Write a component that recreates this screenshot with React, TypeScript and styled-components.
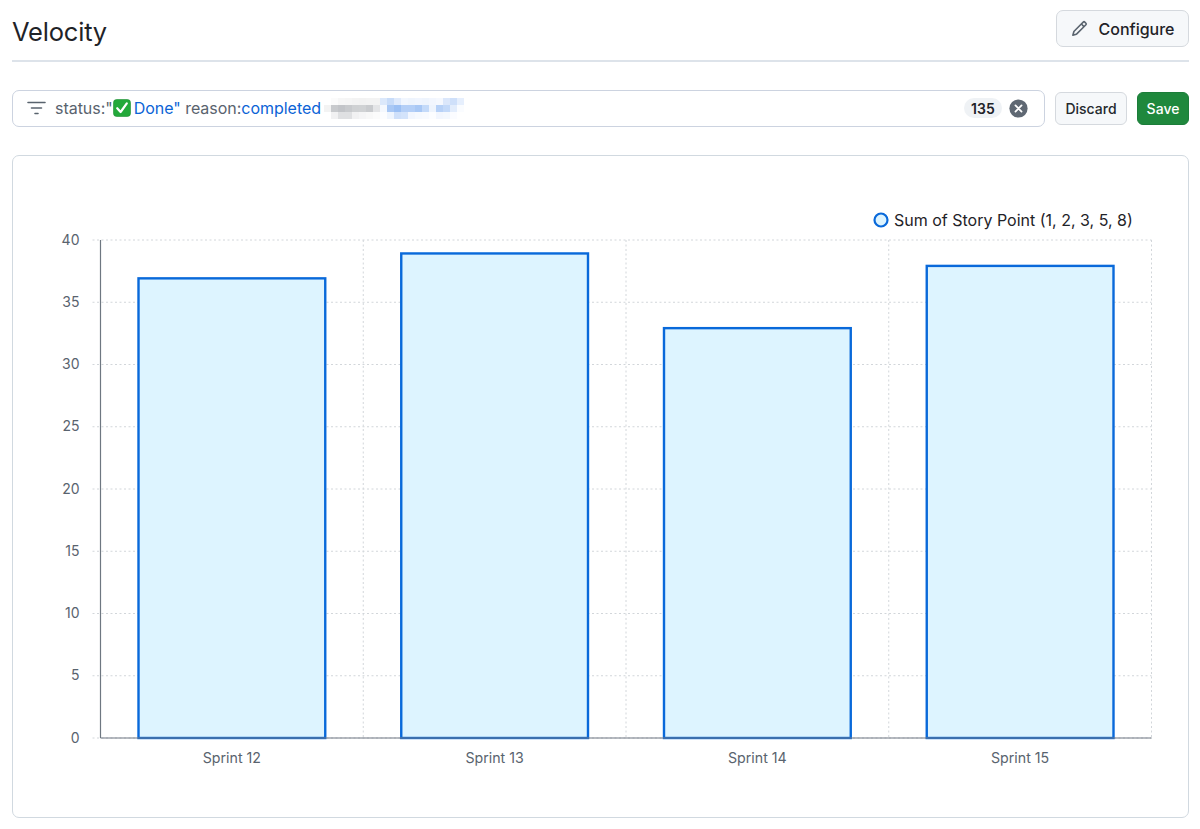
import React from "react";
import styled, { createGlobalStyle } from "styled-components";

const Global = createGlobalStyle`
  html, body { margin: 0; padding: 0; background: #fff; }
  body { font-family: Inter, "Liberation Sans", sans-serif; color: #1f2328; }
`;

const Page = styled.div`
  width: 1200px;
  height: 829px;
  box-sizing: border-box;
  padding: 0 11px 11px 12px;
  display: flex;
  flex-direction: column;
  overflow: hidden;
`;

const Header = styled.header`
  height: 62px;
  box-sizing: border-box;
  border-bottom: 2px solid #dde3ea;
  padding-top: 10px;
  display: flex;
  justify-content: space-between;
  align-items: flex-start;
`;

const Title = styled.h1`
  margin: 0;
  padding-top: 5px;
  font-size: 25.5px;
  line-height: 34px;
  font-weight: 400;
  letter-spacing: -0.2px;
  color: #1f2328;
`;

const ConfigureButton = styled.button`
  width: 133px;
  height: 37px;
  box-sizing: border-box;
  display: flex;
  align-items: center;
  justify-content: center;
  gap: 11px;
  background: #f6f8fa;
  border: 1px solid #d5d9de;
  border-radius: 7px;
  font: 500 16px Inter, "Liberation Sans", sans-serif;
  color: #1f2328;
  padding: 0;
`;

const FilterRow = styled.div`
  margin-top: 28px;
  display: flex;
  align-items: center;
  height: 37px;
`;

const FilterBox = styled.div`
  width: 1033px;
  height: 37px;
  box-sizing: border-box;
  border: 1px solid #ccd3e0;
  border-radius: 7px;
  display: flex;
  align-items: center;
  padding: 0 16px 0 14px;
  font-size: 16px;
  color: #59636e;
  white-space: nowrap;
`;

const Query = styled.span`
  margin-left: 9px;
  display: inline-flex;
  align-items: center;
  letter-spacing: -0.03px;
`;

const Value = styled.span`
  color: #0b63d6;
`;

const Spacer = styled.div`
  flex: 1;
`;

const Count = styled.span`
  width: 38px;
  height: 20px;
  border-radius: 10px;
  background: #eff2f5;
  color: #1f2328;
  font-size: 14px;
  font-weight: 600;
  display: flex;
  align-items: center;
  justify-content: center;
  letter-spacing: 0.2px;
`;

const ClearIcon = styled.svg`
  margin-left: 7px;
  display: block;
`;

const RowButton = styled.button<{ $primary?: boolean }>`
  height: 33px;
  box-sizing: border-box;
  margin-left: 10px;
  width: ${(p) => (p.$primary ? "52px" : "72px")};
  padding: 0;
  border-radius: 6px;
  border: 1px solid ${(p) => (p.$primary ? "#1c7d3a" : "#d5d9de")};
  background: ${(p) => (p.$primary ? "#1f883d" : "#f6f8fa")};
  color: ${(p) => (p.$primary ? "#fff" : "#25292e")};
  font: 500 14px Inter, "Liberation Sans", sans-serif;
`;

const ChartCard = styled.section`
  margin-top: 28px;
  height: 664px;
  box-sizing: border-box;
  border: 1px solid #d1d9e0;
  border-radius: 7px;
  overflow: hidden;
`;

const ChartSvg = styled.svg`
  display: block;
  font-family: Inter, "Liberation Sans", sans-serif;
`;

const MosaicSvg = styled.svg`
  margin-left: 3px;
  display: block;
`;

const DoneSvg = styled.svg`
  margin-right: 3px;
`;

const mosaicRows: string[][] = [
  ["#ffffff", "#fbfbfb", "#f6f6f6", "#f5f5f5", "#f3f3f3", "#f2f2f2", "#f3f3f3", "#f3f3f3", "#dbe8fb", "#c8dcf9", "#dfeafc", "#f1f6fe", "#eef4fd", "#f0f5fe", "#eef4fd", "#f2f6fe", "#f5f8fe", "#dbe7fb", "#cfe0fa", "#e6effd"],
  ["#f3f3f3", "#c8cacd", "#c2c4c8", "#c8cacd", "#cfd1d3", "#d0d2d4", "#c9cbce", "#e4e5e7", "#f4f8fe", "#a9c8f5", "#9cc0f4", "#b4cff7", "#b4cff7", "#a9c8f5", "#c4daf9", "#eef4fd", "#b7d1f7", "#c3d9f9", "#e3edfc", "#fafcff"],
  ["#ffffff", "#f1f1f2", "#dfe0e2", "#dfe0e2", "#f1f1f2", "#f5f5f6", "#f8f8f8", "#fbfbfb", "#fcfdff", "#eff5fe", "#cfe0fa", "#d3e3fb", "#f2f6fe", "#f6f9fe", "#f8fafe", "#fcfdff", "#f2f6fe", "#f4f8fe", "#fbfcff", "#ffffff"],
];

const Mosaic = () => (
  <MosaicSvg width="140" height="21" shapeRendering="crispEdges">
    {mosaicRows.map((row, r) =>
      row.map((c, i) => <rect key={`${r}-${i}`} x={i * 7} y={r * 7} width="7" height="7" fill={c} />)
    )}
  </MosaicSvg>
);

const FilterIcon = () => (
  <svg width="19" height="14" viewBox="0 0 19 14" fill="none" stroke="#59636e" strokeWidth="1.6" strokeLinecap="round">
    <path d="M1 1.5h17M4.5 7h10M8 12.5h3" />
  </svg>
);

const DoneMark = () => (
  <DoneSvg width="18" height="18" viewBox="0 0 18 18">
    <rect x="0.5" y="0.5" width="17" height="17" rx="3.2" fill="#23a93a" stroke="#1c8f30" strokeWidth="0.6" />
    <path d="M4.2 9.2l3.4 3.8L13.8 4.4" fill="none" stroke="#fff" strokeWidth="2.2" strokeLinecap="round" strokeLinejoin="round" />
  </DoneSvg>
);

const PencilIcon = () => (
  <svg width="17" height="17" viewBox="0 0 16 16" fill="#59636e">
    <path d="M11.013 1.427a1.75 1.75 0 0 1 2.474 0l1.086 1.086a1.75 1.75 0 0 1 0 2.474l-8.61 8.61c-.21.21-.47.364-.756.445l-3.251.93a.75.75 0 0 1-.927-.928l.929-3.25c.081-.286.235-.547.445-.758l8.61-8.61Zm.176 4.823L9.75 4.81l-6.286 6.287a.253.253 0 0 0-.064.108l-.558 1.953 1.953-.558a.253.253 0 0 0 .108-.064Zm1.238-3.763a.25.25 0 0 0-.354 0L10.811 3.75l1.439 1.44 1.263-1.263a.25.25 0 0 0 0-.354Z" />
  </svg>
);

const plotLeft = 87.5;
const plotRight = 1138.5;
const plotTop = 84;
const plotBottom = 582;
const unit = (plotBottom - plotTop) / 40;
const band = (plotRight - plotLeft) / 4;

const ticks = [0, 5, 10, 15, 20, 25, 30, 35, 40];
const data = [
  { label: "Sprint 12", value: 37 },
  { label: "Sprint 13", value: 39 },
  { label: "Sprint 14", value: 33 },
  { label: "Sprint 15", value: 38 },
];

const Chart = () => (
  <ChartSvg width="1176" height="662" viewBox="0 0 1176 662">
    {ticks.map((t) => {
      const y = plotBottom - t * unit;
      return (
        <g key={t}>
          <line x1={plotLeft - 8} x2={plotRight} y1={y} y2={y} stroke="#d2d6da" strokeDasharray="2 2.5" />
          <text x={plotLeft - 21} y={y + 4.5} textAnchor="end" fontSize="14" fill="#59636e">{t}</text>
        </g>
      );
    })}
    {[1, 2, 3, 4].map((i) => (
      <line key={i} x1={plotLeft + i * band} x2={plotLeft + i * band} y1={plotTop} y2={plotBottom} stroke="#d2d6da" strokeDasharray="2 2.5" />
    ))}
    {data.map((d, i) => {
      const x = plotLeft + i * band + 38;
      const y = plotBottom - d.value * unit + 1;
      return (
        <g key={d.label}>
          <rect x={x} y={y} width={band - 76} height={plotBottom - y} fill="#ddf4ff" stroke="#0969da" strokeWidth="2.4" />
          <text x={plotLeft + (i + 0.5) * band} y={607} textAnchor="middle" fontSize="14.2" fill="#59636e">{d.label}</text>
        </g>
      );
    })}
    <line x1={plotLeft} x2={plotLeft} y1={plotTop} y2={plotBottom} stroke="#6e7781" strokeWidth="1.2" />
    <line x1={plotLeft} x2={plotRight} y1={plotBottom} y2={plotBottom} stroke="#6e7781" strokeWidth="1.2" />
    <circle cx="868" cy="64" r="6.5" fill="#ddf4ff" stroke="#0969da" strokeWidth="2.2" />
    <text x="881" y="69.5" fontSize="16" fill="#1f2328">Sum of Story Point (1, 2, 3, 5, 8)</text>
  </ChartSvg>
);

export default function App() {
  return (
    <>
      <Global />
      <Page>
        <Header>
          <Title>Velocity</Title>
          <ConfigureButton>
            <PencilIcon />
            Configure
          </ConfigureButton>
        </Header>
        <FilterRow>
          <FilterBox>
            <FilterIcon />
            <Query>
              status:"<DoneMark /><Value>Done"</Value>&nbsp;reason:<Value>completed</Value>
            </Query>
            <Mosaic />
            <Spacer />
            <Count>135</Count>
            <ClearIcon width="19" height="19" viewBox="0 0 20 20">
              <circle cx="10" cy="10" r="9.6" fill="#5f6873" />
              <path d="M6.8 6.8l6.4 6.4M13.2 6.8l-6.4 6.4" stroke="#fff" strokeWidth="1.9" strokeLinecap="round" />
            </ClearIcon>
          </FilterBox>
          <RowButton>Discard</RowButton>
          <RowButton $primary>Save</RowButton>
        </FilterRow>
        <ChartCard>
          <Chart />
        </ChartCard>
      </Page>
    </>
  );
}
